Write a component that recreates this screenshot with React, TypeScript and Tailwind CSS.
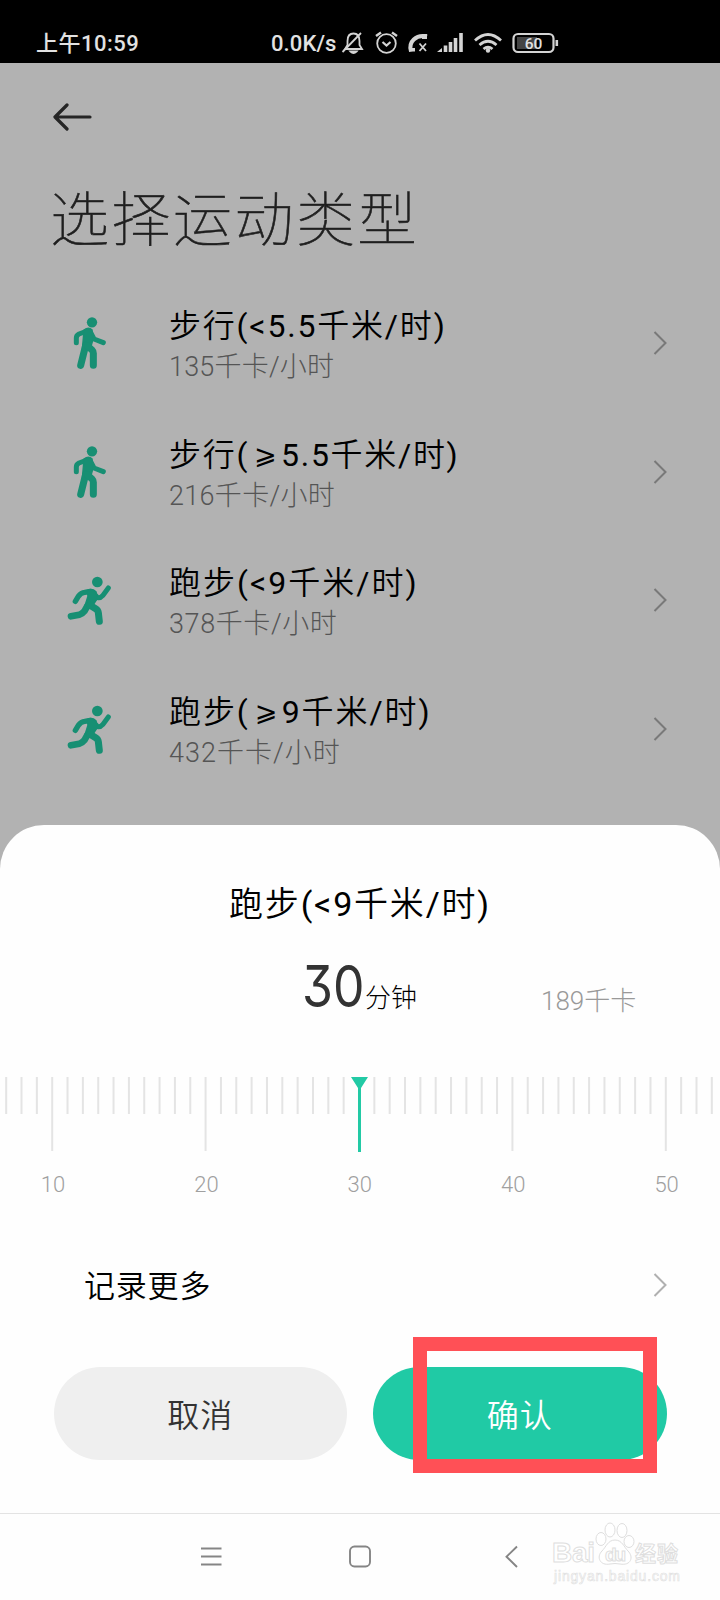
import { ReactNode } from 'react';

interface ISport {
  icon: 'walk' | 'run';
  name: string;
  burn: string;
  nameClass: string;
  burnClass: string;
}

const sports: ISport[] = [
  {
    icon: 'walk',
    name: '步行(<5.5千米/时)',
    burn: '135千卡/小时',
    nameClass: 'tracking-[1.8px]',
    burnClass: 'tracking-[0.2px]',
  },
  {
    icon: 'walk',
    name: '步行(⩾5.5千米/时)',
    burn: '216千卡/小时',
    nameClass: 'tracking-[1.7px]',
    burnClass: 'tracking-[0.3px]',
  },
  {
    icon: 'run',
    name: '跑步(<9千米/时)',
    burn: '378千卡/小时',
    nameClass: 'tracking-[2px]',
    burnClass: 'tracking-[0.6px]',
  },
  {
    icon: 'run',
    name: '跑步(⩾9千米/时)',
    burn: '432千卡/小时',
    nameClass: 'tracking-[1.9px]',
    burnClass: 'tracking-[1px]',
  },
];

const WalkIcon = () => (
  <svg className="h-[60px] w-[47px]" viewBox="52 39 141 180" fill="none" stroke="#178f73" strokeLinecap="round" strokeLinejoin="round">
    <circle cx="127" cy="67" r="15.5" fill="#178f73" stroke="none" />
    <path d="M80 128V114Q80 106 88 102L112 93" strokeWidth="15" />
    <path d="M122 96L133 117L161 128" strokeWidth="15" />
    <path d="M103 90Q116 80 127 89L130 118L124 140L98 148Z" fill="#178f73" strokeWidth="4" />
    <path d="M108 136L93 196" strokeWidth="21" />
    <path d="M114 138L127 150Q131 154 131 160V196" strokeWidth="21" />
  </svg>
);

const RunIcon = () => (
  <svg className="h-[60px] w-[47px]" viewBox="51 30 141 180" fill="none" stroke="#178f73" strokeLinecap="round" strokeLinejoin="round">
    <circle cx="142" cy="66" r="16" fill="#178f73" stroke="none" />
    <path d="M76 124L85 109Q93 98 104 97L122 94" strokeWidth="16" />
    <path d="M130 99L143 113Q151 115 158 107L175 84" strokeWidth="15" />
    <path d="M110 92Q126 84 138 95L142 116L127 138L104 140L114 108Z" fill="#178f73" strokeWidth="4" />
    <path d="M112 138L103 154Q97 162 88 164L63 169" strokeWidth="20" />
    <path d="M120 136L137 146Q144 150 145 158L148 184" strokeWidth="21" />
  </svg>
);

const Chevron = ({ className }: { className: string }) => (
  <svg className={`h-6 w-[14px] ${className}`} viewBox="0 0 14 24" fill="none" stroke="currentColor" strokeWidth="2">
    <path d="M1.500 1L12.500 12L1.500 23" />
  </svg>
);

// Latin characters look too thin next to Chinese at the same weight
const SportName = ({ name }: { name: string }) => (
  <>
    {name.split(/(⩾|[(<)/\d.]+)/).map((part, i) => {
      if (part === '⩾') {
        return (
          <span key={i} className="mx-[5px] inline-block w-[22px] -translate-y-[2px] font-['DejaVu_Sans'] text-[27px] leading-none font-normal tracking-normal">
            {part}
          </span>
        );
      }
      return i % 2 ? (
        <span key={i} className="font-normal">{part}</span>
      ) : (
        part
      );
    })}
  </>
);

const StatusBar = () => (
  <header className="flex h-[63px] bg-black pt-[29px] pl-[36px] text-[#e2e2e2]">
    <div className="w-[235px] pt-px text-[22px] leading-7 font-medium tracking-[0.5px]">上午10:59</div>
    <div className="w-[70px] pt-px text-[22px] leading-7 font-medium tracking-[0.1px]">0.0K/s</div>
    <svg className="h-7 w-[220px]" viewBox="341 29 220 28" fill="none" stroke="#d4d4d4" strokeWidth="1.8">
      {/* muted bell */}
      <path d="M345 49H362L359.500 45V41Q359.500 33.500 353.500 33.500Q347.500 33.500 347.500 41V45Z" />
      <path d="M350.500 51.500Q353.500 54.500 356.500 51.500Z" fill="#d4d4d4" />
      <path d="M342.500 52L361 33" />
      {/* alarm */}
      <circle cx="386.500" cy="43.500" r="9.300" />
      <path d="M382.500 42L386.500 45.500L390.500 42" strokeWidth="2.200" />
      <path d="M376 36L381 32.500M397 36L392 32.500" strokeWidth="2.400" />
      {/* call */}
      <path d="M411 51.500C408 42 416 34 427 36.500" strokeWidth="4" />
      <path d="M409 48H415V51.500H409ZM422 34H427V39H422Z" fill="#d4d4d4" stroke="none" />
      <path d="M419.500 43.500L426 51M426 43.500L419.500 51" />
      {/* signal */}
      <path d="M437 52L442 48V52Z" fill="#d4d4d4" stroke="none" />
      <path d="M445.500 52V45.500M450.500 52V42M455.500 52V38M461 52V33" strokeWidth="3.600" />
      {/* wifi */}
      <path d="M475 40.500Q488 28.500 501 40.500M479.500 45Q488 37.500 496.500 45M483.500 49Q488 45.500 492.500 49" strokeWidth="2.800" />
      <circle cx="488" cy="50.500" r="2.200" fill="#d4d4d4" stroke="none" />
      {/* battery */}
      <rect x="513.500" y="34" width="40" height="18" rx="4.500" strokeWidth="2.200" />
      <rect x="517" y="37" width="20" height="12" fill="#444" stroke="none" />
      <path d="M556.800 40V46" strokeWidth="2.600" />
      <text x="533.500" y="48.500" textAnchor="middle" fontSize="15.500" fontWeight="500" fill="#e2e2e2" stroke="none">60</text>
    </svg>
  </header>
);

const SportRow = ({ sport }: { sport: ISport }) => {
  const { icon, name, burn, nameClass, burnClass } = sport;

  return (
    <li className="flex h-[128.6px] items-center pl-[67px] pr-[53px]">
      {icon === 'walk' ? <WalkIcon /> : <RunIcon />}
      <div className="ml-[55px] flex-1 pt-[8px]">
        <div className={`text-[32px] leading-[41px] font-[350] text-black ${nameClass}`}>
          <SportName name={name} />
        </div>
        <div className={`text-[27px] leading-[41px] font-light text-[#555] ${burnClass}`}>{burn}</div>
      </div>
      <Chevron className="text-[#797979]" />
    </li>
  );
};

const Ruler = () => {
  const ticks = Array.from({ length: 47 }, (_, i) => i + 7);

  return (
    <svg className="h-[124px] w-full" viewBox="0 0 720 124">
      {ticks.filter((t) => t !== 30).map((t) => (
        <rect key={t} x={358 + (t - 30) * 15.34} y="0" width="2" height={t % 10 ? 37 : 74} fill="#e4e4e4" />
      ))}
      <path d="M351 0H368L361 11V75H358V11Z" fill="#22caa5" />
      {[10, 20, 30, 40, 50].map((t) => (
        <text key={t} x={359.8 + (t - 30) * 15.34} y="115" textAnchor="middle" fontSize="22" fontWeight="300" fill="#a0a0a0" fontFamily="Roboto">
          {t}
        </text>
      ))}
    </svg>
  );
};

const PillButton = ({ className, children }: { className: string; children: ReactNode }) => (
  <button className={`h-[93px] w-[293.5px] rounded-full pt-[4px] text-[32px] font-[350] tracking-[1px] ${className}`}>{children}</button>
);

const Watermark = () => (
  <svg className="absolute top-[6px] left-[548px] h-[72px] w-[140px]" viewBox="0 0 140 72" fill="#fff" stroke="#dedede" strokeWidth="1">
    <text x="4" y="42" fontSize="28" fontWeight="700" fontFamily="Liberation Sans" textLength="43">Bai</text>
    <ellipse cx="53" cy="19" rx="5" ry="6.500" />
    <ellipse cx="62" cy="10" rx="5" ry="7" />
    <ellipse cx="74" cy="10.500" rx="5" ry="7" />
    <ellipse cx="81" cy="21.500" rx="5" ry="6" />
    <path d="M67 20C60 20 58 27 54 31C48 37 52 46 62 44Q67 43 72 44C83 46 86 37 80 31C76 27 74 20 67 20Z" />
    <text x="57" y="41" fontSize="19" fontWeight="700" fontFamily="Liberation Sans" textLength="21">du</text>
    <text x="87" y="41" fontSize="21" fontWeight="700" textLength="43">经验</text>
    <text x="6" y="60.5" fontSize="14" fontFamily="Liberation Sans" textLength="126" strokeWidth="0.6">jingyan.baidu.com</text>
  </svg>
);

const NavBar = () => (
  <nav className="relative h-[87px] border-t border-[#e3e3e3]">
    <svg className="h-[86px] w-full" viewBox="0 1514 720 86" fill="none" stroke="#858585" strokeWidth="1.900">
      <path d="M201 1548.500H221.500M201 1556.500H221.500M201 1564.500H221.500" />
      <rect x="350" y="1546.500" width="20" height="20" rx="4.500" />
      <path d="M517 1546.500L506.500 1556.700L517 1567" />
    </svg>
    <Watermark />
  </nav>
);

const DurationSheet = () => (
  <section className="flex h-[775px] flex-col rounded-t-[44px] bg-[#fefefe]">
    <h2 className="mt-[56px] text-center text-[34px] leading-[46px] font-[350] tracking-[1.8px] text-black">
      <SportName name="跑步(<9千米/时)" />
    </h2>
    <div className="mt-[24px] flex h-[70px] items-baseline pl-[302px]">
      <span className="w-[63px] text-[#333]">
        <span className="inline-block origin-left scale-x-[0.86] font-[Inter] text-[58px] leading-[70px] font-normal [font-feature-settings:'cv09']">30</span>
      </span>
      <span className="w-[176px] text-[26px] font-light text-black">分钟</span>
      <span className="translate-y-[3px] text-[26px] font-light text-[#999]">189千卡</span>
    </div>
    <div className="mt-[56px]">
      <Ruler />
    </div>
    <div className="mt-[64px] flex h-[40px] items-center justify-between pr-[53px] pl-[84px]">
      <span className="pt-[4px] text-[31px] leading-10 font-[350] tracking-[0.8px] text-black">记录更多</span>
      <Chevron className="text-[#b0b0b0]" />
    </div>
    <div className="relative mt-[62px] flex gap-[26px] pl-[53.5px]">
      <PillButton className="bg-[#efefef] text-[#333]">取消</PillButton>
      <PillButton className="bg-[#20caa5] text-white">确认</PillButton>
      <div className="absolute top-[-30px] left-[413px] h-[136px] w-[244px] border-[14px] border-[#ff5056]" />
    </div>
    <div className="mt-auto">
      <NavBar />
    </div>
  </section>
);

export default function App() {
  return (
    <div className="flex h-[1600px] w-[720px] flex-col overflow-hidden bg-[#b2b2b2] font-[Roboto,'Noto_Sans_CJK_SC',sans-serif]">
      <StatusBar />
      <main className="h-[762px]">
        <svg className="mt-[40px] ml-[53px] h-7 w-10" viewBox="0 0 40 28" fill="none" stroke="#252525" strokeWidth="3.200" strokeLinecap="round" strokeLinejoin="round">
          <path d="M37 14H2.500M14 2L2 14L14 26" />
        </svg>
        <h1 className="mt-[50px] ml-[50px] text-[59px] leading-[80px] font-thin tracking-[2.500px] text-[#1f1f1f] [-webkit-text-stroke:0.6px_#1f1f1f]">
          选择运动类型
        </h1>
        <ul className="mt-[18px]">
          {sports.map((sport) => (
            <SportRow key={sport.burn} sport={sport} />
          ))}
        </ul>
      </main>
      <DurationSheet />
    </div>
  );
}
